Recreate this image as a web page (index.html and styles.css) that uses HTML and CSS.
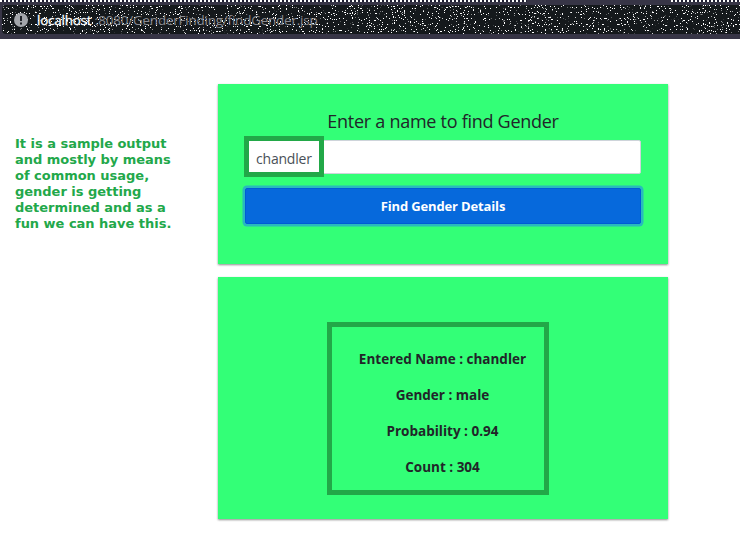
FILE: index.html
```html
<!DOCTYPE html>
<html lang="en">
<head>
<meta charset="utf-8">
<title>Find Gender</title>
<link rel="stylesheet" href="styles.css">
</head>
<body>
<header class="browser">
  <div class="address">
    <svg class="speckle" width="740" height="29" aria-hidden="true">
      <filter id="grain" x="0" y="0" width="100%" height="100%" color-interpolation-filters="sRGB">
        <feTurbulence type="fractalNoise" baseFrequency="0.83" numOctaves="2" seed="8"/>
        <feColorMatrix values="0 0 0 0 1  0 0 0 0 1  0 0 0 0 1  24 0 0 0 -15.8"/>
      </filter>
      <rect width="740" height="29" filter="url(#grain)"/>
    </svg>
    <svg class="info" width="14" height="14" viewBox="0 0 14 14" aria-hidden="true">
      <circle cx="7" cy="7" r="7" fill="#a3a6ab"/>
      <path d="M7 3v5M7 9.5v2" stroke="#202329" stroke-width="2"/>
    </svg>
    <span class="url"><span class="host">localhost</span><span class="path">:8080/GenderFinding/findGender.jsp</span></span>
  </div>
</header>
<main class="page">
  <aside class="note">It is a sample output<br>and mostly by means<br>of common usage,<br>gender is getting<br>determined and as a<br>fun we can have this.</aside>
  <div class="cards">
    <section class="card form">
      <h1 class="title">Enter a name to find Gender</h1>
      <div class="field">
        <span class="value">chandler</span>
        <span class="marker"></span>
      </div>
      <button class="submit"><span>Find Gender Details</span></button>
    </section>
    <section class="card result">
      <div class="details">
        <p>Entered Name : chandler</p>
        <p>Gender : male</p>
        <p>Probability : 0.94</p>
        <p>Count : 304</p>
      </div>
    </section>
  </div>
</main>
</body>
</html>
```
FILE: styles.css
```css
* { box-sizing: border-box; }
body {
  margin: 0;
  height: 534px;
  overflow: hidden;
  background: #fff;
  color: #212529;
  font-family: "Open Sans", "Noto Sans", sans-serif;
}
.browser {
  height: 39px;
  padding-top: 5px;
  background: #373546;
  background-image: repeating-linear-gradient(90deg, #fff 0 2px, #202034 2px 4px), repeating-linear-gradient(90deg, #fff 0 2px, #202034 2px 4px);
  background-size: 527px 2px, 69px 2px;
  background-position: 0 0, 671px 0;
  background-repeat: no-repeat;
}
.address {
  position: relative;
  display: flex;
  align-items: center;
  height: 29px;
  margin-left: 2px;
  padding: 1px 0 0 12px;
  background: #15191c;
  border-radius: 4px 0 0 4px;
  overflow: hidden;
}
.speckle { position: absolute; left: 0; top: 0; }
.info { position: relative; margin-right: 9px; }
.url {
  position: relative;
  font-size: 13.4px;
  line-height: 20px;
  white-space: nowrap;
}
.host { display: inline-block; width: 58px; color: #fff; letter-spacing: -.2px; -webkit-text-stroke: .3px #fff; }
.path { color: #8a8b91; letter-spacing: -.18px; }
.page { display: flex; padding: 45px 0 0 15px; }
.note {
  width: 203px;
  padding-top: 52px;
  color: #22a84a;
  font: bold 13px/16px "DejaVu Sans", sans-serif;
  letter-spacing: -.02px;
  white-space: nowrap;
}
.card {
  width: 450px;
  background: #33ff77;
  box-shadow: 0 1px 2px rgba(0, 0, 0, .45);
}
.form { height: 180px; padding: 24px 27px 0; margin-bottom: 13px; }
.title {
  margin: 0 0 5px;
  font-size: 18px;
  line-height: 27px;
  font-weight: 400;
  letter-spacing: -.27px;
  text-align: center;
  white-space: nowrap;
}
.field {
  position: relative;
  height: 34px;
  padding: 0 10px;
  background: #fff;
  border: 1px solid #ced4da;
  border-radius: 2px;
  color: #495057;
  font-size: 14px;
  letter-spacing: -.2px;
  line-height: 35px;
}
.marker {
  position: absolute;
  left: -2px;
  top: -5px;
  width: 80px;
  height: 41px;
  border: 5px solid #22a848;
}
.submit {
  display: block;
  width: 100%;
  height: 36px;
  margin-top: 14px;
  padding: 0;
  border: 1px solid #005cd4;
  border-radius: 2px;
  background: #0669dc;
  box-shadow: 0 0 0 2.5px #29b9bd;
  color: #fff;
  font: bold 13px/34px "Open Sans", sans-serif;
  letter-spacing: -.15px;
}
.result { height: 242px; padding: 45px 0 0 109px; }
.details {
  width: 222px;
  height: 173px;
  padding: 14px 0 0 9px;
  border: 5px solid #22a848;
  text-align: center;
}
.details p { margin: 0; font-size: 13.5px; font-weight: 700; line-height: 36px; white-space: nowrap; }
```
